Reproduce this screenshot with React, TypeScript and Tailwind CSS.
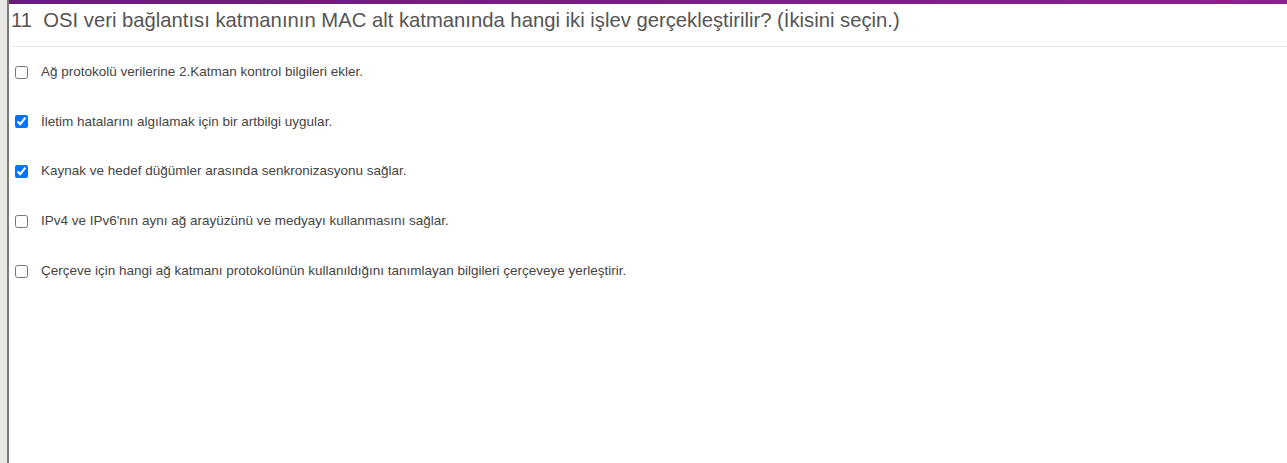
const options = [
  { text: 'Ağ protokolü verilerine 2.Katman kontrol bilgileri ekler.', checked: false },
  { text: 'İletim hatalarını algılamak için bir artbilgi uygular.', checked: true },
  { text: 'Kaynak ve hedef düğümler arasında senkronizasyonu sağlar.', checked: true },
  { text: "IPv4 ve IPv6'nın aynı ağ arayüzünü ve medyayı kullanmasını sağlar.", checked: false },
  { text: 'Çerçeve için hangi ağ katmanı protokolünün kullanıldığını tanımlayan bilgileri çerçeveye yerleştirir.', checked: false },
]

export default function App() {
  return (
    <div className="flex h-[463px] bg-white font-['Liberation_Sans',Arial,sans-serif]">
      {/* left frame strip */}
      <div className="w-[7px] shrink-0 bg-[#e8e6e2]" />
      <div className="w-[2px] shrink-0 bg-[#7a7a7a]" />

      <div className="flex-1 flex flex-col">
        <div className="h-[4px] bg-gradient-to-r from-[#6a1a7c] to-[#8d1f8d]" />

        <div className="ml-[2px] border-b border-[#e6e6e6] h-[43px] pt-[4px]">
          <h1 className="text-[20.25px] text-[#555] leading-[24px]">
            11&nbsp;&nbsp;OSI veri bağlantısı katmanının MAC alt katmanında hangi iki işlev gerçekleştirilir? (İkisini seçin.)
          </h1>
        </div>

        <div className="flex flex-col gap-[33.75px] pl-[6px] pt-[17px]">
          {options.map((o, i) => (
            <label key={i} className="flex items-center h-[16px] text-[13.5px] text-[#444]">
              <input type="checkbox" defaultChecked={o.checked} className="w-[13px] h-[13px] m-0 accent-[#0075ff]" />
              <span className="ml-[13px]">{o.text}</span>
            </label>
          ))}
        </div>
      </div>
    </div>
  )
}
